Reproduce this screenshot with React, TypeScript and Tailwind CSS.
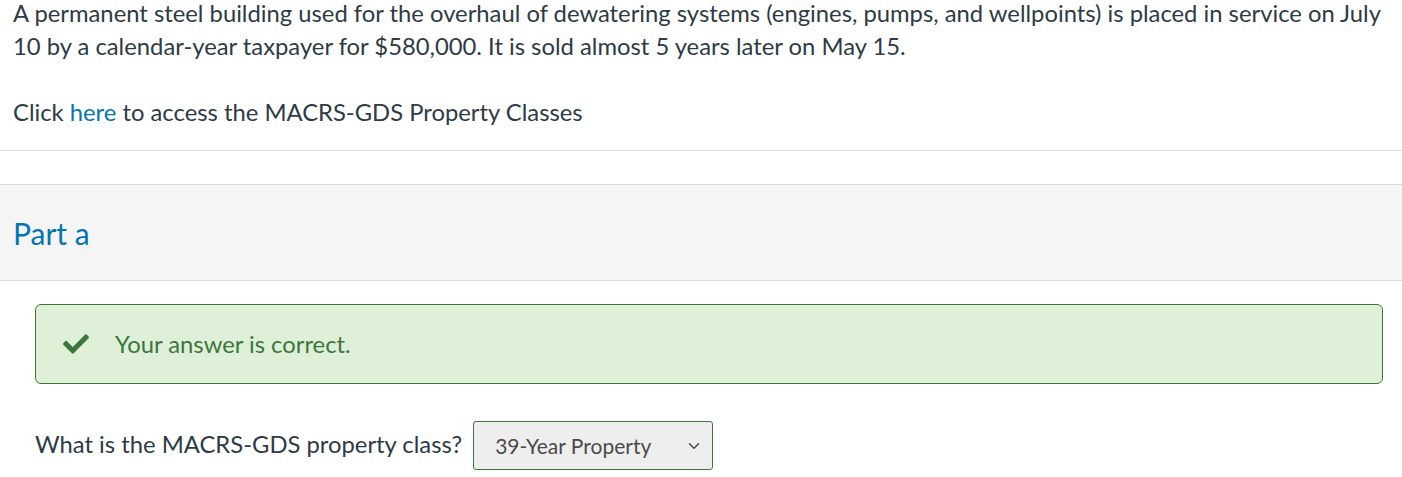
import { FaCheck } from "react-icons/fa";
import { ChevronDown } from "lucide-react";

export default function App() {
  return (
    <div className="min-h-[477px] bg-white font-['Lato','Liberation_Sans',sans-serif] text-[23.8px] leading-[33px] text-[#2d3b45]">
      <div className="px-[13px]">
        <p className="-mt-[3px]">
          A permanent steel building used for the overhaul of dewatering systems (engines, pumps, and wellpoints) is
          placed in service on July 10 by a calendar-year taxpayer for $580,000. It is sold almost 5 years later on May
          15.
        </p>
        <p className="mt-[33px]">
          Click <span className="text-[#0374b5]">here</span> to access the MACRS-GDS Property Classes
        </p>
      </div>

      <div className="mt-[21px] border-t border-[#dcdcdc]" />

      <div className="mt-[33px] flex h-[97px] items-center border-y border-[#dcdcdc] bg-[#f5f5f5] px-[13px]">
        <h2 className="text-[30px] leading-none text-[#0374b5]">Part a</h2>
      </div>

      <div className="ml-[35px] mr-[19px] mt-[23px] flex h-[80px] items-center rounded-[6px] border border-[#3c763d] bg-[#dff0d8] pl-[24px]">
        <FaCheck className="h-[26px] w-[32px] text-[#3a783d]" />
        <span className="ml-[23px] text-[#3c763d]">Your answer is correct.</span>
      </div>

      <div className="ml-[35px] mt-[37px] flex items-center gap-[11px]">
        <span className="-mt-[3px]">What is the MACRS-GDS property class?</span>
        <div className="flex h-[49px] w-[240px] items-center justify-between rounded-[3px] border border-[#3c763d] bg-[#eeeeee] pl-[21px] pr-[9px] text-[#4a4a4a]">
          <span className="text-[21px]">39-Year Property</span>
          <ChevronDown className="h-[18px] w-[18px]" strokeWidth={2} />
        </div>
      </div>
    </div>
  );
}
